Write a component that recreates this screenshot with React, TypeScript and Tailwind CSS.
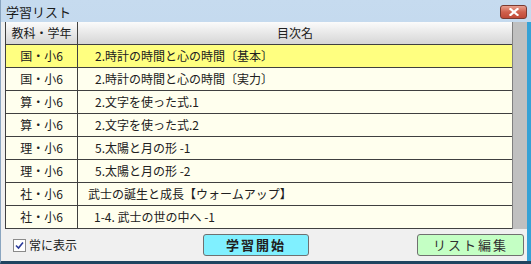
import React from "react";

type Row = { subject: string; title: string; indent: string; active?: boolean };

const ROWS: Row[] = [
  { subject: "国・小6", title: "2.時計の時間と心の時間〔基本〕", indent: "pl-[17px]", active: true },
  { subject: "国・小6", title: "2.時計の時間と心の時間〔実力〕", indent: "pl-[17px]" },
  { subject: "算・小6", title: "2.文字を使った式.1", indent: "pl-[17px]" },
  { subject: "算・小6", title: "2.文字を使った式.2", indent: "pl-[17px]" },
  { subject: "理・小6", title: "5.太陽と月の形 -1", indent: "pl-[17px]" },
  { subject: "理・小6", title: "5.太陽と月の形 -2", indent: "pl-[17px]" },
  { subject: "社・小6", title: "武士の誕生と成長【ウォームアップ】", indent: "pl-[10px]" },
  { subject: "社・小6", title: "1-4. 武士の世の中へ -1", indent: "pl-[16px]" },
];

const font = { fontFamily: '"Noto Sans CJK JP", "Noto Sans", sans-serif' };

export default function App() {
  return (
    <div
      className="flex h-[264px] w-[531px] flex-col overflow-hidden border-b-[3px] border-l border-[#1f4460] border-l-[#8aa5c0] bg-gradient-to-b from-[#c6dbef] to-[#b7cfe7] text-[12px] text-[#202020]"
      style={font}
    >
      {/* title bar */}
      <div className="flex h-[22px] shrink-0 items-center justify-between pl-[5px] pr-[4px]">
        <span className="text-[13px] leading-none text-[#1a1a1a]">学習リスト</span>
        <button className="mt-[1px] flex h-[14px] w-[27px] items-center justify-center rounded-[3px] border border-[#7a3a30] bg-gradient-to-b from-[#e8a090] via-[#d0604c] to-[#c04a38]">
          <svg width="10" height="8" viewBox="0 0 10 8">
            <path d="M1.5 1 L8.5 7 M8.5 1 L1.5 7" stroke="#ffffff" strokeWidth="2.2" strokeLinecap="square" />
          </svg>
        </button>
      </div>

      <div className="flex flex-1 flex-col border-r-[4px] border-[#36a2d6] bg-[#f0f0f0] pl-[4px]">
        {/* table + scrollbar */}
        <div className="flex h-[207px] shrink-0">
          <div className="flex w-[508px] flex-col border-l border-[#404040]">
            <div className="flex h-[23px] shrink-0 border-b border-[#404040] bg-gradient-to-b from-[#fbfbfb] to-[#d6d6d6]">
              <div className="flex w-[72px] items-center justify-center border-r border-[#404040]">教科・学年</div>
              <div className="flex flex-1 items-center justify-center">目次名</div>
            </div>
            {ROWS.map((r, i) => (
              <div
                key={i}
                className={`flex h-[23px] shrink-0 border-b border-[#404040] ${r.active ? "bg-[#ffff80]" : "bg-[#ffffee]"}`}
              >
                <div className="flex w-[72px] items-center justify-center border-r border-[#404040]">{r.subject}</div>
                <div className={`flex flex-1 items-center ${r.indent}`}>{r.title}</div>
              </div>
            ))}
          </div>
          <div className="w-[15px] border-l border-[#808080] bg-[#c0c0c0]" />
        </div>

        {/* bottom bar */}
        <div className="flex flex-1 items-center pl-[8px] pr-[3px]">
          <label className="flex items-center gap-[3px]">
            <span className="flex h-[13px] w-[13px] items-center justify-center border border-[#8a8a8a] bg-white">
              <svg width="9" height="9" viewBox="0 0 9 9">
                <path d="M1 4.5 L3.5 7 L8 1.5" stroke="#2a3a9a" strokeWidth="1.6" fill="none" />
              </svg>
            </span>
            <span>常に表示</span>
          </label>
          <button className="ml-[126px] h-[22px] w-[106px] rounded-[3px] border border-[#707070] bg-[#80f0ff] text-[13px] font-bold tracking-[2px] text-[#202020]">
            学習開始
          </button>
          <button className="ml-auto h-[22px] w-[107px] rounded-[3px] border border-[#707070] bg-[#c4ffc4] text-[13px] tracking-[2px] text-[#303030]">
            リスト編集
          </button>
        </div>
      </div>
    </div>
  );
}
